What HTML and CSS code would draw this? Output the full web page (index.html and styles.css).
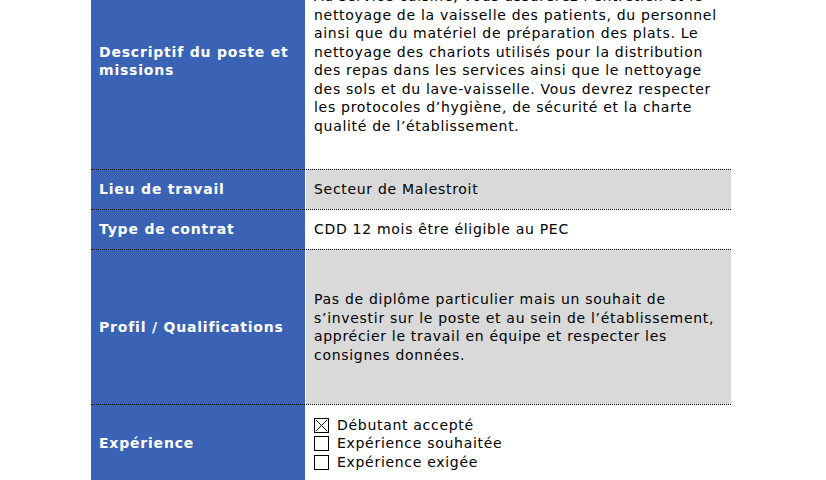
FILE: index.html
```html
<!DOCTYPE html>
<html lang="fr">
<head>
<meta charset="utf-8">
<link rel="stylesheet" href="styles.css">
</head>
<body>
<div class="sheet">
  <div class="row row-desc">
    <div class="label">Descriptif du poste et missions</div>
    <div class="value white">
      <p>Au service cuisine, vous assurerez l’entretien et le nettoyage de la vaisselle des patients, du personnel ainsi que du matériel de préparation des plats. Le nettoyage des chariots utilisés pour la distribution des repas dans les services ainsi que le nettoyage des sols et du lave-vaisselle. Vous devrez respecter les protocoles d’hygiène, de sécurité et la charte qualité de l’établissement.</p>
    </div>
  </div>
  <div class="row row-short">
    <div class="label">Lieu de travail</div>
    <div class="value grey">Secteur de Malestroit</div>
  </div>
  <div class="row row-short">
    <div class="label">Type de contrat</div>
    <div class="value white">CDD 12 mois être éligible au PEC</div>
  </div>
  <div class="row row-profil">
    <div class="label">Profil / Qualifications</div>
    <div class="value grey">Pas de diplôme particulier mais un souhait de s’investir sur le poste et au sein de l’établissement, apprécier le travail en équipe et respecter les consignes données.</div>
  </div>
  <div class="row row-exp">
    <div class="label">Expérience</div>
    <div class="value white">
      <div class="check"><span class="box"><svg viewBox="0 0 14 14" width="14" height="14"><path d="M1 1 L13 13 M13 1 L1 13" stroke="#000" stroke-width="1" fill="none"/></svg></span>Débutant accepté</div>
      <div class="check"><span class="box"></span>Expérience souhaitée</div>
      <div class="check"><span class="box"></span>Expérience exigée</div>
    </div>
  </div>
</div>
</body>
</html>
```
FILE: styles.css
```css
html, body {
  margin: 0;
  padding: 0;
  background: #fff;
}
body {
  font-family: "DejaVu Sans", Verdana, sans-serif;
  font-size: 14px;
  letter-spacing: 0.7px;
  line-height: 18.5px;
  color: #000;
  overflow: hidden;
}
.sheet {
  margin-left: 91px;
  margin-top: -47px;
  width: 640px;
  display: flex;
  flex-direction: column;
}
.row {
  display: grid;
  grid-template-columns: 214px 425px;
  column-gap: 1px;
}
.row + .row .label,
.row + .row .value {
  border-top: 1px dotted #000;
}
.label {
  background: #3a62b5;
  color: #fff;
  font-weight: bold;
  letter-spacing: 0.8px;
  padding: 0 8px;
  display: flex;
  align-items: center;
}
.value {
  padding: 0 8px;
  display: flex;
  flex-direction: column;
  justify-content: center;
}
.value p { margin: 0; }
.white { background: #fff; }
.grey { background: #d9d9d9; }
.row-desc { height: 216px; }
.row-short { height: 40px; }
.row-profil { height: 155px; }
.row-exp { height: 78px; }
.check {
  display: flex;
  align-items: center;
  gap: 8px;
}
.box {
  width: 15px;
  height: 15px;
  border: 1px solid #000;
  display: flex;
  box-sizing: border-box;
  flex: none;
}
.box svg { display: block; width: 13px; height: 13px; }
```
